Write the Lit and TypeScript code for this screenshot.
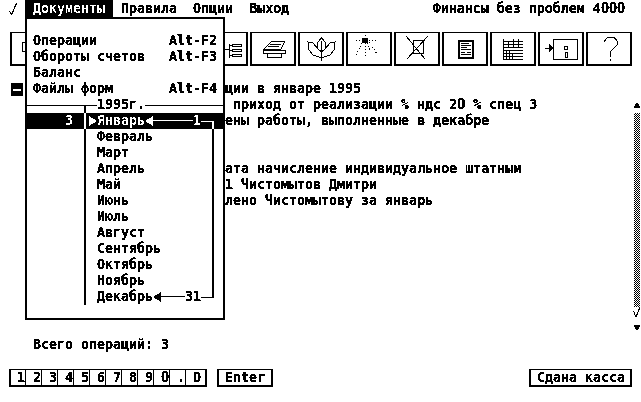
import { LitElement, html, css, svg } from "lit";
import { customElement } from "lit/decorators.js";

const ICONS = [
  svg`<rect x="10" y="9" width="8" height="9"/>`,
  svg``,
  svg``,
  svg``,
  svg`<path d="M25 11V25M21 16H25M25 12H28M25 17H28M25 22H28"/><rect x="28" y="11" width="9" height="2"/><rect x="28" y="16" width="9" height="2"/><rect x="28" y="21" width="9" height="2"/>`,
  svg`<path d="M20 8H33L29 16H12ZM18 11H29M16 13H27"/><rect x="11" y="17" width="22" height="3"/><rect x="15" y="20" width="14" height="4"/>`,
  svg`<path d="M21.5 5L26 10L25 16L30 10L35 9L34 17L30 22L24 24H19L13 22L9 17L8 9L13 10L18 16L17 10ZM21.5 8V28M21.5 19L26 15M21.5 19L17 15"/>`,
  svg`<rect class="fill" x="14" y="5" width="5" height="4"/><path class="dots" d="M17 2V4M8 7H13M21 7H30M14 10L8 22M17 10V25M19 10L22 18M21 9L29 21"/>`,
  svg`<rect x="17" y="7" width="10" height="13"/><path d="M10 3L29 26M32 3L11 26"/>`,
  svg`<rect x="14" y="7" width="15" height="18"/><rect x="15" y="8" width="13" height="16"/><path d="M17 10H25M17 12H27M17 14H23M17 16H27M17 19H21M23 19H27M17 21H27"/>`,
  svg`<path d="M11 8H31M11 11H31M11 14H31M11 17H31M11 20H31M11 23H31M11 26H31M11 6V26M16 8V14M21 6V14M26 6V14M14 17V26M17 17V26M20 20V26"/>`,
  svg`<path d="M5 15H12"/><polygon class="fill" points="9,11 13,15 9,19"/><rect x="13" y="6" width="24" height="20"/><circle cx="26" cy="15" r="2"/><rect x="25" y="19" width="2" height="5"/>`,
  svg`<path d="M16 9L19 5L26 4L29 8V12L22 19V24M22 26V28"/>`,
];

const MONTHS = ["Январь", "Февраль", "Март", "Апрель", "Май", "Июнь", "Июль", "Август", "Сентябрь", "Октябрь", "Ноябрь", "Декабрь"];
const KEYS = ["1", "2", "3", "4", "5", "6", "7", "8", "9", "0", ".", "D"];
const left = html`<svg class="tri" viewBox="0 0 8 10"><polygon points="8,0 8,10 0,5"/></svg>`;
const right = html`<svg class="tri" viewBox="0 0 8 10"><polygon points="0,0 0,10 8,5"/></svg>`;

@customElement("app-root")
export class AppRoot extends LitElement {
  static styles = css`
    :host { display: block; width: 641px; height: 402px; background: #fff; overflow: hidden; }
    .screen {
      position: relative; width: 641px; height: 402px; background: #fff; color: #000;
      font: bold 13.3px/16px "DejaVu Sans Mono", "Liberation Mono", monospace;
      white-space: nowrap; filter: url(#bw); overflow: hidden;
    }
    .defs { position: absolute; width: 0; height: 0; }
    .z { font-family: Roboto, sans-serif; font-size: 14px; line-height: 1; letter-spacing: 0; }
    .bar { display: flex; height: 17px; line-height: 17px; }
    .check { width: 8px; height: 12px; margin: 3px 8px 0 9px; fill: none; stroke: #000; }
    .bar > span { padding: 0 8px; }
    .bar .on { background: #000; color: #fff; }
    .bar .title { margin-left: auto; padding: 0 16px 0 0; }
    .tools { display: flex; gap: 2px; margin: 15px 0 0 10px; }
    .tool { width: 46px; height: 34px; box-sizing: border-box; border: 2px solid #000; border-top-width: 1px; }
    .tool svg { display: block; width: 42px; height: 31px; fill: none; stroke: #000; stroke-width: 1; shape-rendering: crispEdges; }
    .tool .fill, .scroll .fill { fill: #000; }
    .tool .dots { stroke-dasharray: 1 2; }
    .main { display: flex; height: 256px; margin-top: 15px; }
    .list { flex: 1; }
    .ln { height: 16px; padding-left: 225px; display: flex; }
    .ln.in { padding-left: 233px; }
    .ln > span { display: block; }
    .minus {
      width: 12px; height: 13px; background: #000; display: flex; align-items: center; justify-content: center;
      margin: 2px 202px 0 -214px;
    }
    .minus i { width: 8px; height: 2px; background: #fff; }
    .scroll { width: 8px; margin-top: 21px; display: flex; flex-direction: column; align-items: center; }
    .scroll svg { display: block; flex: none; }
    .hatch {
      width: 6px; height: 194px; margin-top: 5px; flex: none;
      background: repeating-conic-gradient(#000 0 25%, #fff 0 50%) 0 0 / 2px 2px;
    }
    .tip { width: 8px; height: 11px; fill: none; stroke: #000; shape-rendering: crispEdges; }
    .arrow { width: 8px; height: 6px; margin-top: 7px; }
    .up { width: 8px; height: 6px; }
    .total { padding-left: 33px; height: 16px; }
    .bottom { display: flex; margin-top: 16px; }
    .btn { height: 18px; box-sizing: border-box; border: 2px solid #000; border-top-width: 1px; line-height: 15px; }
    .pad { display: flex; margin-left: 9px; }
    .key { width: 16px; box-sizing: border-box; border-right: 1px solid #000; padding-left: 7px; }
    .key:first-child { width: 15px; padding-left: 6px; }
    .key:last-child { width: 19px; border: 0; padding-left: 7px; }
    .enter { margin-left: 10px; width: 56px; padding-left: 6px; }
    .paid { margin-left: auto; margin-right: 9px; width: 103px; padding-left: 6px; }
    .menu {
      position: absolute; left: 25px; top: 17px; width: 200px; height: 303px; box-sizing: border-box;
      border: 2px solid #000; background: #fff; padding-top: 14px;
    }
    .item { display: flex; justify-content: space-between; height: 16px; padding: 0 6px; }
    .year { display: flex; align-items: center; height: 16px; position: relative; }
    .year hr { flex: 1; height: 1px; border: 0; margin: 0; background: #000; }
    .year hr:first-child { flex: none; width: 70px; }
    .year i { position: absolute; left: 57px; top: 8px; width: 2px; height: 8px; background: #000; }
    .month { display: grid; grid-template-columns: 57px 1fr; height: 16px; }
    .month.on { background: #000; color: #fff; margin: 0 -2px; padding: 0 2px; }
    .count { text-align: right; padding-right: 11px; }
    .cell {
      display: flex; align-items: stretch; border-left: 2px solid currentColor; padding-left: 11px; margin-right: 9px;
    }
    .cell.on { padding-left: 3px; }
    .tri { width: 8px; height: 10px; margin-top: 3px; fill: currentColor; flex: none; shape-rendering: crispEdges; }
    .wire { flex: 1; height: 8px; border-bottom: 1px solid currentColor; box-sizing: border-box; }
    .tail { width: 13px; box-sizing: border-box; margin-left: auto; border-right: 2px solid currentColor; }
    .tail.top { height: 9px; align-self: flex-start; border-bottom: 1px solid currentColor; }
    .tail.bot { height: 8px; align-self: flex-end; border-top: 1px solid currentColor; }
  `;

  render() {
    return html`<div class="screen">
      <svg class="defs"><filter id="bw" color-interpolation-filters="sRGB" x="0" y="0" width="100%" height="100%"><feComponentTransfer><feFuncR type="discrete" tableValues="0 0 1"/><feFuncG type="discrete" tableValues="0 0 1"/><feFuncB type="discrete" tableValues="0 0 1"/></feComponentTransfer></filter></svg>
      <div class="bar">
        <svg class="check" viewBox="0 0 8 12"><path d="M0.5 8L2.5 11.5L7.5 0.5"/></svg>
        <span class="on">Документы</span><span>Правила</span><span>Опции</span><span>Выход</span>
        <span class="title">Финансы без проблем 4<span class="z">000</span></span>
      </div>
      <div class="tools">${ICONS.map((i) => html`<div class="tool"><svg viewBox="0 0 42 31">${i}</svg></div>`)}</div>
      <div class="main">
        <div class="list">
          <div class="ln"><div class="minus"><i></i></div><span>ции в январе 1995</span></div>
          <div class="ln in"><span>приход от реализации % ндс 2<span class="z">0</span> % спец 3</span></div>
          <div class="ln"><span>ены работы, выполненные в декабре</span></div>
          <div class="ln"></div><div class="ln"></div>
          <div class="ln"><span>ата начисление индивидуальное штатным</span></div>
          <div class="ln"><span>1 Чистомытов Дмитри</span></div>
          <div class="ln"><span>лено Чистомытову за январь</span></div>
        </div>
        <div class="scroll">
          <svg class="up fill" viewBox="0 0 8 6"><polygon points="4,0 7.5,6 0.5,6"/></svg>
          <div class="hatch"></div>
          <svg class="tip" viewBox="0 0 8 11"><path d="M0.5 4L3 10L7 0"/></svg>
          <svg class="arrow fill" viewBox="0 0 8 6"><polygon points="0.5,0 7.5,0 4,6"/></svg>
        </div>
      </div>
      <div class="total">Всего операций: 3</div>
      <div class="bottom">
        <div class="btn pad">${KEYS.map((k) => html`<div class="key">${k === "0" ? html`<span class="z">0</span>` : k}</div>`)}</div>
        <div class="btn enter">Enter</div>
        <div class="btn paid">Сдана касса</div>
      </div>
      <div class="menu">
        <div class="item"><span>Операции</span><span>Alt-F2</span></div>
        <div class="item"><span>Обороты счетов</span><span>Alt-F3</span></div>
        <div class="item"><span>Баланс</span></div>
        <div class="item"><span>Файлы форм</span><span>Alt-F4</span></div>
        <div class="year"><hr /><span>1995г.</span><hr /><i></i></div>
        ${MONTHS.map((m, i) => {
          if (i === 0)
            return html`<div class="month on"><div class="count">3</div><div class="cell on">${right}<span>${m}</span>${left}<div class="wire"></div><span>1</span><div class="tail bot"></div></div></div>`;
          if (i === 11)
            return html`<div class="month"><div class="count"></div><div class="cell"><span>${m}</span>${left}<div class="wire"></div><span>31</span><div class="tail top"></div></div></div>`;
          return html`<div class="month"><div class="count"></div><div class="cell"><span>${m}</span><div class="tail"></div></div></div>`;
        })}
      </div>
    </div>`;
  }
}
